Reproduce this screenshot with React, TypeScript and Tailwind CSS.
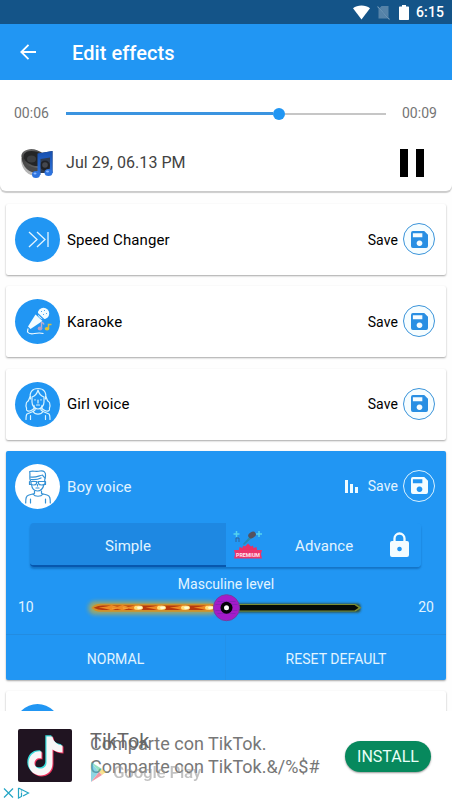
import type { ReactNode } from 'react';
import clsx from 'clsx';

type Effect = {
  name: string;
  icon: ReactNode;
};

function StatusBar() {
  return (
    <div className="flex h-6 items-center justify-end bg-[#145488] pr-2 text-white">
      <svg className="h-[15px] w-[17px]" viewBox="0 0 17 15" fill="currentColor">
        <path d="M0 3.200C2.300 1.300 5.200.4 8.500.4s6.200.9 8.500 2.800L8.500 14.400z" />
      </svg>
      <svg className="ml-[7px] h-[15px] w-[13px]" viewBox="0 0 13 15">
        <path d="M1.500 3.200 11 13.500H1.500zM4.500 1h7v11.500L2.600 3z" fill="#5683a8" />
        <path d="M.5 1.500 12.500 14.500" stroke="#7b9fbc" strokeWidth="1.100" />
      </svg>
      <svg className="ml-[9px] h-[15px] w-[10px]" viewBox="0 0 10 15" fill="currentColor">
        <path d="M3 0h4v1.500h2.300q.7 0 .7.700v12q0 .8-.7.800H.7q-.7 0-.7-.8v-12q0-.7.700-.7H3z" />
      </svg>
      <span className="ml-[7px] text-[14px] leading-6 font-medium tracking-[0.1px]">6:15</span>
    </div>
  );
}

function Toolbar() {
  return (
    <header className="flex h-14 items-center bg-[#2196f3] pl-5 text-white">
      <svg className="h-4 w-4" viewBox="0 0 16 16" fill="none" stroke="currentColor" strokeWidth="1.800">
        <path d="M16 8H1.500M8.500.8 1.300 8l7.200 7.200" />
      </svg>
      <h1 className="ml-9 pt-[2px] text-[20px] font-medium tracking-[0.060px]">Edit effects</h1>
    </header>
  );
}

function SpeakerIcon() {
  return (
    <svg className="h-[32px] w-[34px]" viewBox="0 0 34 32">
      <defs>
        <linearGradient id="rim" x1="0" y1="0" x2="1" y2="1">
          <stop offset="0" stopColor="#8a8a8a" />
          <stop offset=".4" stopColor="#3a3a3a" />
          <stop offset="1" stopColor="#777" />
        </linearGradient>
        <linearGradient id="note" x1="0" y1="0" x2="0" y2="1">
          <stop offset="0" stopColor="#174fae" />
          <stop offset="1" stopColor="#2f74dc" />
        </linearGradient>
      </defs>
      <path d="M1 12C1 19 5 27 13 28.500l8-1-2-8z" fill="#b5b5b5" />
      <path d="M1.500 11C3 20 8 25 16 26l5-6z" fill="#4a4a4a" />
      <ellipse cx="14.500" cy="11.500" rx="13.500" ry="8.800" transform="rotate(18 14.500 11.500)" fill="url(#rim)" />
      <ellipse cx="14.500" cy="11.500" rx="11.300" ry="7" transform="rotate(18 14.500 11.500)" fill="#242526" />
      <ellipse cx="11.500" cy="12" rx="4.500" ry="3.500" fill="#3c3e40" />
      <path d="M18 6.500 32.500 4v22H18z" fill="#2f3b50" />
      <circle cx="25" cy="18.500" r="5" fill="#202226" />
      <circle cx="25" cy="18" r="2.800" fill="#45484e" />
      <path d="M17.500 6.500 32.500 4v22H30V10.500L20.500 12v16h-3z" fill="url(#note)" />
      <ellipse cx="16" cy="27.500" rx="4" ry="3.500" fill="#2d73df" />
      <ellipse cx="28.500" cy="25.500" rx="4" ry="3.500" fill="#2d73df" />
      <ellipse cx="15" cy="26.500" rx="1.500" ry="1" fill="#8db9ff" />
      <ellipse cx="27.500" cy="24.500" rx="1.500" ry="1" fill="#8db9ff" />
    </svg>
  );
}

function Player() {
  return (
    <section className="relative z-10 h-[111px] rounded-b-md bg-white shadow-[0_2px_1px_rgba(0,0,0,0.2)]">
      <div className="flex h-[67px] items-center px-[14px] text-[14px] text-[#757575]">
        <span className="w-[52px]">00:06</span>
        <div className="flex w-[320px] items-center">
          <div className="h-[3px] w-[207px] bg-[#3b94e0]" />
          <div className="h-3 w-3 rounded-full bg-[#2196f3]" />
          <div className="h-[2px] flex-1 bg-[#c6c6c6]" />
        </div>
        <span className="ml-4">00:09</span>
      </div>
      <div className="flex h-8 items-center pl-5">
        <SpeakerIcon />
        <span className="ml-3 text-[16px] tracking-[0.050px] text-[#424242]">Jul 29, 06.13 PM</span>
        <div className="-mt-[1px] mr-7 ml-auto flex gap-2">
          <div className="h-[28px] w-2 bg-black" />
          <div className="h-[28px] w-2 bg-black" />
        </div>
      </div>
    </section>
  );
}

function SpeedIcon() {
  return (
    <svg className="h-full w-full" viewBox="0 0 45 45" fill="none" stroke="#e4f5ff" strokeWidth="1.300">
      <path d="m14 15 8 7.500-8 7.500M22 15l8 7.500-8 7.500M33 15v15" />
    </svg>
  );
}

function MicIcon() {
  return (
    <svg className="h-full w-full" viewBox="0 0 45 45">
      <circle cx="28.500" cy="14.500" r="5.700" fill="#f3fcff" />
      <path d="m20.500 15.500 7 6.500-12 8-2.500-2.500z" fill="#f3fcff" />
      <path d="m21.500 13.500 8 7.500" stroke="#2196f3" strokeWidth="1.100" />
      <path d="m26 12 1 1m2-2 1 1m-2 3 1 1m2-2 1 1" stroke="#50a8ee" strokeWidth="1" />
      <path d="m13 29.500-.5 3.500q2 2.500 7 1.500t9 0" fill="none" stroke="#f3fcff" strokeWidth="1.200" />
      <path d="M26.500 29.500V23.500q2 0 2.500 2" fill="none" stroke="#bcaed2" strokeWidth="1.400" />
      <ellipse cx="25" cy="29.500" rx="2.300" ry="1.900" fill="#b1a2ca" />
      <path d="M33.500 30v-4.500h3" fill="none" stroke="#d7be43" strokeWidth="1.500" />
      <ellipse cx="32" cy="29.700" rx="2.300" ry="1.700" fill="#e0c13d" />
    </svg>
  );
}

function GirlIcon() {
  return (
    <svg className="h-full w-full" viewBox="0 0 45 45" fill="none" stroke="#d9f4ff" strokeWidth="1.200" strokeLinecap="round" strokeLinejoin="round">
      <path d="M15.500 17C14 10 17.500 6.500 23 6.500S32 10 30.500 17M23 8c-1 4-3 6-6 7v5c0 4 3 7 6 7s6-3 6-7v-5c-3-1-5-3-6-7" />
      <path d="M15.500 14.500c-2 2-1 4-3 5s-1 3-1.500 4 1 2 .5 3.500 2 3 4.500 1.500c3-1 4-3 3-5M30.500 14.500c2 2 1 4 3 5s1 3 1.500 4-1 2-.5 3.500-2 3-4.500 1.500c-3-1-4-3-3-5" />
      <path d="M20 17.500v.6M26 17.500v.6M23 18v3M21.500 23h3M20 26v2l-2 1.500c2 3.500 8 3.500 10 0L26 28v-2M18 29.500l-6 2.500q-1 1-1 5.500M28 29.500l6 2.500q1 1 1 5.500M15.500 33.500v4M30.500 33.500v4" />
    </svg>
  );
}

function BoyIcon() {
  return (
    <svg className="h-full w-full" viewBox="0 0 45 45" fill="none" stroke="#3491d5" strokeWidth="1.200" strokeLinecap="round" strokeLinejoin="round">
      <path d="M15.500 17c-1.500-3 0-5-.8-9.500C18 6.500 21 8 25 7c4-.8 6 1.500 5.500 5-.3 2-.8 3-.8 5" />
      <path d="M15.500 13c5 1 8-1 12-2 1 2 2 2.500 2.700 3M16 15.500c4 .5 7 0 10-1.500" />
      <path d="M16 17.500h5.500v2q-.4 1.500-2.800 1.500T16 19.500zM23.500 17.500H30v2q-.5 1.500-3.300 1.500t-3.200-1.500zM21.500 18h2M14.500 17.500v3h2c.5 4 3 6.500 6 6.500s5.500-2.500 6.500-6.500h1.500v-3M22.500 20.500v1.500M21 24h3" />
      <path d="M19.500 27v2.500L14 31c-3 1-3.300 3-3.300 8M26.500 27v2.500L32 31c3 1 3.300 3 3.300 8M18 30c2 3 8 3 10 0M15.500 35v4M30.500 35v4" />
    </svg>
  );
}

function SaveButton({ active }: { active?: boolean }) {
  return (
    <div
      className={clsx(
        '-mt-[1px] flex h-8 w-8 items-center justify-center rounded-full border',
        active ? 'border-[#d9f2ff] text-[#f3fcff]' : 'border-[#3b94da] bg-[#f6fdff] text-[#298fe3]'
      )}
    >
      <svg className="h-[17px] w-[17px]" viewBox="0 0 18 18" fill="currentColor" fillRule="evenodd">
        <path d="M2 0h12l4 4v12q0 2-2 2H2q-2 0-2-2V2Q0 0 2 0zM2 2.500v4h10v-4zM9 10a3 3 0 1 0 .01 0z" />
      </svg>
    </div>
  );
}

function EffectHeader({ effect, active }: { effect: Effect; active?: boolean }) {
  return (
    <div className="flex h-[71px] items-center pr-[11px] pl-[9px]">
      <div className={clsx('h-[45px] w-[45px] rounded-full', active ? 'bg-white' : 'bg-[#2196f3]')}>{effect.icon}</div>
      <span className={clsx('ml-[7px] pt-[1px] text-[15px] tracking-[0.1px]', active && 'text-[#e1f4ff]')}>{effect.name}</span>
      {active && (
        <svg className="ml-auto h-[13px] w-[13px]" viewBox="0 0 13 13" fill="#effbff">
          <path d="M0 0h3v13H0zM5 4h3v9H5zM10 7h3v6h-3z" />
        </svg>
      )}
      <span className={clsx('mr-[5px] pt-[1px] text-[14px] tracking-[0.1px]', active ? 'ml-[10px] text-[#e1f4ff]' : 'ml-auto')}>
        Save
      </span>
      <SaveButton active={active} />
    </div>
  );
}

function PremiumBadge() {
  return (
    <svg className="h-[30px] w-[30px]" viewBox="0 0 30 30">
      <path d="M3.500 1v6M.5 4h6M26 1v6M23 4h6" stroke="#55d3ee" strokeWidth="1.500" />
      <path d="m10 14 8-9 2 2-9 8z" fill="#278bb1" />
      <ellipse cx="19" cy="5" rx="4" ry="3" transform="rotate(-30 19 5)" fill="#56525f" />
      <path d="M3 12V8h3v4" fill="none" stroke="#335e91" strokeWidth=".9" />
      <path d="m6 20 .5-3 3 1 .5-2.500 2 1 3-3 3 3 2-1 .5 2.500 3-1 .5 3z" fill="#e93266" />
      <path d="M1 20h28l-1 4 1 4.500H1L2 24z" fill="#ec356b" />
      <text x="3" y="26.500" textLength="24" lengthAdjust="spacingAndGlyphs" fontFamily="Roboto" fontWeight="700" fontSize="5.800" fill="#ffe6ef">
        PREMIUM
      </text>
    </svg>
  );
}

function ModeTabs() {
  return (
    <div className="mr-[25px] ml-6 mt-[1px] flex h-[44px] rounded-[4px] text-[15px] text-[#e1f4ff] shadow-[0_2px_2px_rgba(0,65,130,0.4)]">
      <div className="flex w-[196px] items-center justify-center rounded-l-[4px] border-b-2 border-[#0757ae] bg-[#1e88e2]">
        <span className="pt-[4px] tracking-[0.060px]">Simple</span>
      </div>
      <div className="flex flex-1 items-center rounded-r-[4px] bg-[#2196f3] pl-[7px]">
        <PremiumBadge />
        <span className="ml-8 pt-[2px] tracking-[0.1px]">Advance</span>
        <svg className="mr-[12px] ml-auto h-[25px] w-[19px]" viewBox="0 0 19 25">
          <path d="M4.500 10V6.500a5 5 0 0 1 10 0V10" fill="none" stroke="#f3fcff" strokeWidth="2.300" />
          <path d="M2 9h15q2 0 2 2v12q0 2-2 2H2q-2 0-2-2V11Q0 9 2 9zm7.500 5.700a2.300 2.300 0 1 0 .01 0z" fill="#f3fcff" fillRule="evenodd" />
        </svg>
      </div>
    </div>
  );
}

// x of each flame's bright head
const flames = [114, 125, 138, 161, 185, 209];

function FlameSlider() {
  return (
    <svg className="h-[28px] w-[290px]" viewBox="80.500 593.500 290 28">
      <defs>
        <filter id="glow" x="-10%" y="-200%" width="120%" height="500%">
          <feGaussianBlur stdDeviation="2.200" />
        </filter>
        <filter id="soft" x="-10%" y="-100%" width="120%" height="300%">
          <feGaussianBlur stdDeviation="1.200" />
        </filter>
      </defs>
      <rect x="88" y="601" width="128" height="13" rx="6" fill="#c2ad3c" opacity=".75" filter="url(#glow)" />
      <path d="M91 607.200q3-4 9-4h113v8H100q-6 0-9-4z" fill="#d0912a" />
      <path d="M93 607.200q5-2.300 9-2.300h111v4.600H102q-4 0-9-2.300z" fill="#b8390c" />
      {flames.map((x, i) => (
        <g key={x}>
          <path d={`M${x - 16} 607.200Q${x - 6} 606 ${x - 3} 604.500L${x + 4} 607.200L${x - 3} 609.900Q${x - 6} 608.400 ${x - 16} 607.200z`} fill="#ee8a22" />
          <ellipse cx={x} cy="607.200" rx={i < 2 ? 3 : 4.500} ry={i < 2 ? 1.300 : 2.200} fill={i < 2 ? '#f3a63c' : '#ffdf7a'} />
          {i > 1 && <ellipse cx={x + 1} cy="607.200" rx="2.500" ry="1.300" fill="#fffbd8" />}
        </g>
      ))}
      <rect x="228" y="603" width="132" height="9" rx="3" fill="#304d35" filter="url(#soft)" />
      <path d="M230 603.500h125l6 3.700-6 3.800H230z" fill="#7b8d35" />
      <path d="M230 604.500h124l4 2.700-4 2.800H230z" fill="#050a08" />
      <circle cx="226" cy="607.200" r="13" fill="#a51bc9" stroke="#74409b" strokeWidth="1" />
      <path d="M217 601h18M215 604h22M215 610h22M217 613h18" stroke="#8721b8" strokeWidth="1" />
      <circle cx="226" cy="607.200" r="6" fill="#050208" />
      <circle cx="226" cy="607.200" r="2.500" fill="#fff" />
    </svg>
  );
}

function ExpandedEffect({ effect }: { effect: Effect }) {
  return (
    <div className="flex h-[229px] flex-col rounded-[2px] bg-[#2196f3] text-[#e1f4ff] shadow-[0_1px_2px_rgba(0,0,0,0.35)]">
      <EffectHeader effect={effect} active />
      <ModeTabs />
      <div className="mt-[7px] text-center text-[14px] leading-5 tracking-[0.050px]">Masculine level</div>
      <div className="flex h-[28px] items-center justify-between px-3 text-[14px]">
        <span>10</span>
        <FlameSlider />
        <span>20</span>
      </div>
      <div className="mt-3 grid flex-1 grid-cols-2 border-t border-[#238ce0] text-[14px]">
        <button className="border-r border-[#2391e9] pt-[5px] tracking-[0.050px]">NORMAL</button>
        <button className="pt-[5px] tracking-[0.030px]">RESET DEFAULT</button>
      </div>
    </div>
  );
}

function TikTokLogo() {
  const note = 'M28 7h6c.7 5 4 8 10 9v7c-4 0-7-1-10-3v14c0 8-6 12-12 12s-12-5-12-12c0-8 6-13 13-12v7c-4-1-7 1-7 5 0 3 3 5 6 5s6-2 6-6z';
  return (
    <svg className="h-[53px] w-[54px] shrink-0 rounded-[2px] bg-[#201421]" viewBox="0 0 54 53">
      <path d={note} fill="#ed315d" transform="translate(1.500 1.500)" />
      <path d={note} fill="#37dbda" transform="translate(-.7 -.7)" />
      <path d={note} fill="#f7f7f7" transform="translate(.5 .5)" />
    </svg>
  );
}

function AdBanner() {
  return (
    <footer className="relative flex h-[89px] bg-white pt-[18px] pl-[17.500px]">
      <TikTokLogo />
      {/* headline and store badge bleed through the description */}
      <div className="relative ml-[18.500px] w-[245px] text-[18px] text-[#777]">
        <div className="pt-[3px] leading-[23px] tracking-[0.020px] whitespace-nowrap">
          Comparte con TikTok.
          <br />
          Comparte con TikTok.&amp;/%$#
        </div>
        <span className="absolute top-0 left-0 text-[20px] leading-6 text-[#666]">TikTok</span>
        <div className="absolute top-[33px] left-[1px] flex items-center opacity-60">
          <svg className="h-[20px] w-[15px]" viewBox="0 0 15 20">
            <path d="M0 0v20l8-10z" fill="#45bad2" />
            <path d="m0 0 11 7-3 3z" fill="#53ce9b" />
            <path d="m11 7 4 3-4 3-3-3z" fill="#f4cf4c" />
            <path d="m0 20 11-7-3-3z" fill="#e8536a" />
          </svg>
          <span className="ml-[7px] text-[17px] leading-5 font-medium tracking-[-0.250px] whitespace-nowrap text-[#999]">Google Play</span>
        </div>
      </div>
      <button className="mt-[12px] ml-[10px] h-[31px] w-[86px] rounded-full bg-[#07895d] text-[16px] text-[#e9fff7] shadow-[0_1px_2px_rgba(0,0,0,0.4)]">
        INSTALL
      </button>
      <svg className="absolute bottom-[1px] left-[3px] h-[12px] w-[27px]" viewBox="0 0 27 12" fill="none" stroke="#24a5c4" strokeWidth="1.200">
        <path d="m1 1.500 9 9M10 1.500l-9 9M15.500 1v10l2.500-1.200M15.500 1l10 5-5.500 3M18.500 5.500V10M18.500 3.500v1" />
      </svg>
    </footer>
  );
}

const effects: Effect[] = [
  { name: 'Speed Changer', icon: <SpeedIcon /> },
  { name: 'Karaoke', icon: <MicIcon /> },
  { name: 'Girl voice', icon: <GirlIcon /> },
];

export default function App() {
  return (
    <div className="flex h-[800px] w-[452px] flex-col overflow-hidden bg-white font-[Roboto,sans-serif] text-black">
      <StatusBar />
      <Toolbar />
      <Player />
      <main className="flex min-h-0 flex-1 flex-col gap-[11.330px] overflow-hidden bg-[#fefefe] px-[6px] pt-[13px]">
        {effects.map((e) => (
          <div key={e.name} className="shrink-0 rounded-[2px] bg-white shadow-[0_1px_2px_rgba(0,0,0,0.35)]">
            <EffectHeader effect={e} />
          </div>
        ))}
        <div className="shrink-0">
          <ExpandedEffect effect={{ name: 'Boy voice', icon: <BoyIcon /> }} />
        </div>
        {/* next card, only its top edge is scrolled into view */}
        <div className="flex h-[71px] shrink-0 items-center rounded-[2px] bg-white pl-[9px] shadow-[0_1px_2px_rgba(0,0,0,0.35)]">
          <div className="h-[45px] w-[45px] rounded-full bg-[#2196f3]" />
        </div>
      </main>
      <AdBanner />
    </div>
  );
}
